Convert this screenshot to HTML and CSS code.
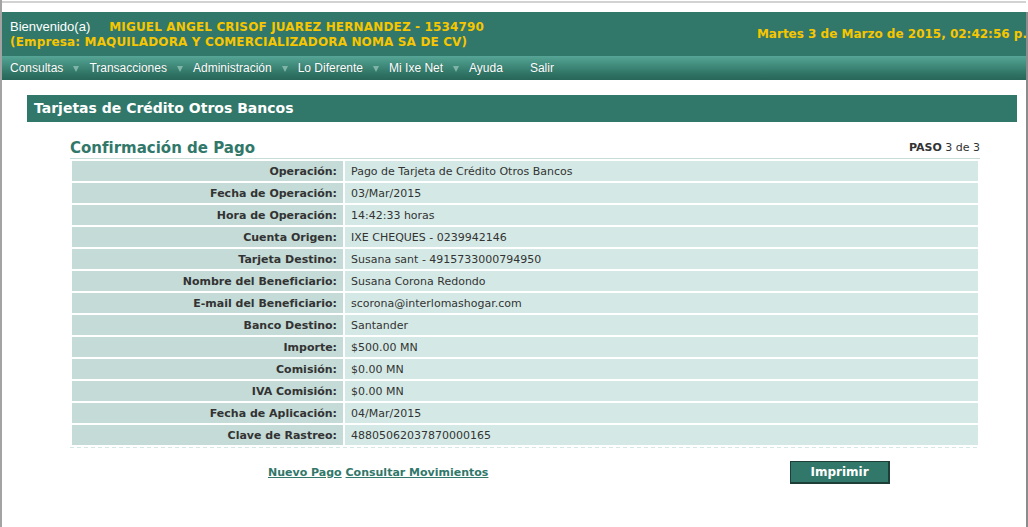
FILE: index.html
```html
<!DOCTYPE html>
<html lang="es">
<head>
<meta charset="utf-8">
<title>Tarjetas de Crédito Otros Bancos</title>
<link rel="stylesheet" href="styles.css">
</head>
<body>
<div class="topstrip"><div class="topline"></div></div>
<div class="frame">
  <div class="header">
    <div class="welcome">
      <div class="line1"><span class="hello">Bienvenido(a)</span><span class="user">MIGUEL ANGEL CRISOF JUAREZ HERNANDEZ - 1534790</span></div>
      <div class="line2">(Empresa: MAQUILADORA Y COMERCIALIZADORA NOMA SA DE CV)</div>
    </div>
    <div class="date">Martes 3 de Marzo de 2015, 02:42:56 p.m.</div>
  </div>
  <nav class="menu">
    <span class="item">Consultas<i class="arrow"></i></span>
    <span class="item">Transacciones<i class="arrow"></i></span>
    <span class="item">Administración<i class="arrow"></i></span>
    <span class="item">Lo Diferente<i class="arrow"></i></span>
    <span class="item">Mi Ixe Net<i class="arrow"></i></span>
    <span class="item plain">Ayuda</span>
    <span class="item plain">Salir</span>
  </nav>
  <div class="content">
    <div class="titlebar">Tarjetas de Crédito Otros Bancos</div>
    <div class="section">
      <div class="sechead">
        <h2>Confirmación de Pago</h2>
        <div class="paso"><b>PASO</b> 3 de 3</div>
      </div>
      <table class="datos">
        <tr><th>Operación:</th><td>Pago de Tarjeta de Crédito Otros Bancos</td></tr>
        <tr><th>Fecha de Operación:</th><td>03/Mar/2015</td></tr>
        <tr><th>Hora de Operación:</th><td>14:42:33 horas</td></tr>
        <tr><th>Cuenta Origen:</th><td>IXE CHEQUES - 0239942146</td></tr>
        <tr><th>Tarjeta Destino:</th><td>Susana sant - 4915733000794950</td></tr>
        <tr><th>Nombre del Beneficiario:</th><td>Susana Corona Redondo</td></tr>
        <tr><th>E-mail del Beneficiario:</th><td>scorona@interlomashogar.com</td></tr>
        <tr><th>Banco Destino:</th><td>Santander</td></tr>
        <tr><th>Importe:</th><td>$500.00 MN</td></tr>
        <tr><th>Comisión:</th><td>$0.00 MN</td></tr>
        <tr><th>IVA Comisión:</th><td>$0.00 MN</td></tr>
        <tr><th>Fecha de Aplicación:</th><td>04/Mar/2015</td></tr>
        <tr><th>Clave de Rastreo:</th><td>48805062037870000165</td></tr>
      </table>
      <div class="dashed"></div>
      <div class="actions">
        <div class="links"><a href="#">Nuevo Pago</a> <a href="#">Consultar Movimientos</a></div>
        <button class="btn" type="button">Imprimir</button>
      </div>
    </div>
  </div>
</div>
</body>
</html>
```

FILE: styles.css
```css
html, body {
  margin: 0;
  padding: 0;
  background: #fff;
  height: 100%;
  overflow: hidden;
}
body {
  font-family: "DejaVu Sans", Verdana, sans-serif;
}
.topstrip {
  height: 12px;
  border-left: 2px solid #a3a3a3;
  box-sizing: border-box;
  padding-top: 1px;
}
.topline {
  height: 2px;
  background: #d2d2d2;
  margin-right: 2px;
}
.frame {
  border-left: 2px solid #a3a3a3;
  border-right: 2px solid #8c8c8c;
  height: calc(100% - 12px);
  box-sizing: border-box;
  overflow: hidden;
}
.header {
  background: #31786a;
  height: 44px;
  display: flex;
  align-items: center;
  padding-left: 8px;
  overflow: hidden;
  white-space: nowrap;
}
.welcome {
  flex-shrink: 0;
}
.line1, .line2 {
  height: 16px;
  line-height: 16px;
}
.hello {
  font-family: "Liberation Sans", Arial, sans-serif;
  font-size: 13px;
  color: #fff;
  margin-right: 19px;
}
.user, .line2, .date {
  font-weight: bold;
  font-size: 12px;
  color: #f7c600;
  letter-spacing: 0.15px;
}
.date {
  margin-left: auto;
  margin-right: -18px;
  flex-shrink: 0;
  letter-spacing: 0;
}
.menu {
  height: 24px;
  background: linear-gradient(#56a596 0, #4b9888 20%, #2f7364 75%, #276658 100%);
  display: flex;
  align-items: center;
  padding-left: 8px;
  font-family: "Liberation Sans", Arial, sans-serif;
  font-size: 12px;
  color: #fff;
  text-shadow: 0 0 1px rgba(0,0,0,0.25);
}
.item {
  display: flex;
  align-items: center;
  margin-right: 10px;
}
.item.plain {
  margin-right: 27px;
}
.arrow {
  display: inline-block;
  width: 0;
  height: 0;
  border-left: 3px solid transparent;
  border-right: 3px solid transparent;
  border-top: 6px solid #7fb5a9;
  margin-left: 10px;
  margin-top: 1px;
}
.content {
  padding: 15px 9px 0 25px;
}
.titlebar {
  background: #31786a;
  color: #fff;
  font-weight: bold;
  font-size: 14px;
  height: 27px;
  line-height: 27px;
  padding-left: 7px;
}
.section {
  margin: 12px 0 0 43px;
  width: 910px;
}
.sechead {
  display: flex;
  justify-content: space-between;
  align-items: flex-end;
  border-bottom: 1px solid #c5dcd8;
  height: 24px;
}
.sechead h2 {
  margin: 0;
  font-size: 15px;
  color: #31786a;
  line-height: 20px;
}
.paso {
  font-size: 11px;
  color: #333;
  line-height: 15px;
  padding-bottom: 3px;
}
.datos {
  width: 910px;
  border-collapse: separate;
  border-spacing: 2px;
  font-size: 11px;
  color: #333;
}
.datos th, .datos td {
  height: 20px;
  padding: 0;
  box-sizing: border-box;
}
.datos th {
  width: 271px;
  background: #c4dbd7;
  text-align: right;
  padding-right: 6px;
  font-weight: bold;
}
.datos td {
  background: #d4e9e5;
  padding-left: 6px;
}
.dashed {
  height: 1px;
  background: repeating-linear-gradient(90deg, #d4e9e5 0 4px, transparent 4px 7px);
}
.actions {
  display: flex;
  align-items: center;
  margin-top: 13px;
}
.links {
  margin-left: 198px;
  font-size: 11px;
  font-weight: bold;
}
.links a {
  color: #31786a;
  text-decoration: underline;
}
.btn {
  margin-left: auto;
  margin-right: 90px;
  width: 100px;
  height: 23px;
  background: #31786a;
  border: 2px solid #1d3f38;
  border-top-width: 1px;
  border-left-width: 1px;
  color: #fff;
  font-family: "DejaVu Sans", Verdana, sans-serif;
  font-weight: bold;
  font-size: 12px;
  padding: 0;
}
```
